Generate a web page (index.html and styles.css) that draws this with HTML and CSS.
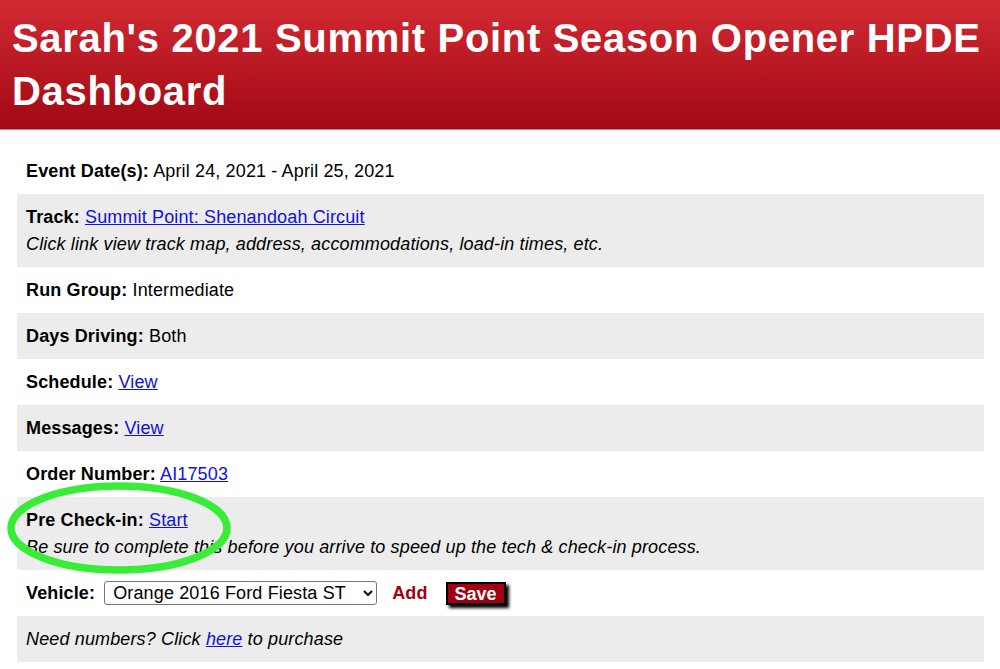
FILE: index.html
```html
<!DOCTYPE html>
<html lang="en">
<head>
<meta charset="utf-8">
<title>Dashboard</title>
<link rel="stylesheet" href="styles.css">
</head>
<body>
<header class="header">
  <h1 class="title">Sarah's 2021 Summit Point Season Opener HPDE Dashboard</h1>
</header>
<main class="list">
  <div class="row"><b>Event Date(s):</b> April 24, 2021 - April 25, 2021</div>
  <div class="row"><b>Track:</b> <a href="#">Summit Point: Shenandoah Circuit</a><br><i>Click link view track map, address, accommodations, load-in times, etc.</i></div>
  <div class="row"><b>Run Group:</b> Intermediate</div>
  <div class="row"><b>Days Driving:</b> Both</div>
  <div class="row"><b>Schedule:</b> <a href="#">View</a></div>
  <div class="row"><b>Messages:</b> <a href="#">View</a></div>
  <div class="row"><b>Order Number:</b> <a href="#">AI17503</a></div>
  <div class="row"><b>Pre Check-in:</b> <a href="#">Start</a><br><i>Be sure to complete this before you arrive to speed up the tech &amp; check-in process.</i></div>
  <div class="row vehicle">
    <b>Vehicle:</b>
    <select class="select"><option>Orange 2016 Ford Fiesta ST</option></select>
    <a href="#" class="add">Add</a>
    <button class="save">Save</button>
  </div>
  <div class="row"><i>Need numbers? Click <a href="#">here</a> to purchase</i></div>
</main>
<svg class="circle" width="240" height="100" viewBox="0 0 240 100">
  <ellipse cx="117" cy="48" rx="108" ry="42" fill="none" stroke="#38ec38" stroke-width="7.5"/>
</svg>
</body>
</html>
```
FILE: styles.css
```css
html, body {
  margin: 0;
  padding: 0;
  background: #fff;
}
body {
  font-family: "Liberation Sans", Arial, Helvetica, sans-serif;
  color: #000;
  position: relative;
  width: 1000px;
  height: 669px;
  overflow: hidden;
}
.header {
  background: linear-gradient(to bottom, #d22a33 0%, #a10913 100%);
  height: 130px;
  box-sizing: border-box;
  padding: 12px 12px 0 12px;
  border-bottom: 1px solid #c97a80;
}
.title {
  margin: 0;
  color: #fff;
  font-size: 40px;
  line-height: 53px;
  font-weight: bold;
  letter-spacing: 0.68px;
}
.list {
  margin: 18px 16px 0 17px;
}
.row {
  font-size: 18px;
  line-height: 27px;
  padding: 9.5px 9px;
  background: #fff;
  letter-spacing: 0.14px;
}
.row:nth-child(even) {
  background: #ececec;
}
.row a {
  color: #1010e6;
}
.vehicle {
  display: flex;
  align-items: center;
}
.select {
  margin-left: 9px;
  width: 273px;
  height: 24px;
  font-family: "Liberation Sans", Arial, sans-serif;
  font-size: 18px;
  letter-spacing: 0.14px;
  border: 1px solid #767676;
  border-radius: 3px;
  background: #fff;
  color: #000;
  padding: 0 4px;
}
.row a.add {
  color: #a00012;
  font-weight: bold;
  text-decoration: none;
  margin-left: 15px;
}
.save {
  margin-left: 18px;
  background: #a00012;
  color: #fff;
  font-family: "Liberation Sans", Arial, sans-serif;
  font-weight: bold;
  font-size: 18px;
  line-height: 18px;
  border: 2px solid #000;
  padding: 1px 7px;
  box-shadow: 3px 3px 3px #000;
  height: 23px;
}
.circle {
  position: absolute;
  left: 2px;
  top: 480px;
}
```
